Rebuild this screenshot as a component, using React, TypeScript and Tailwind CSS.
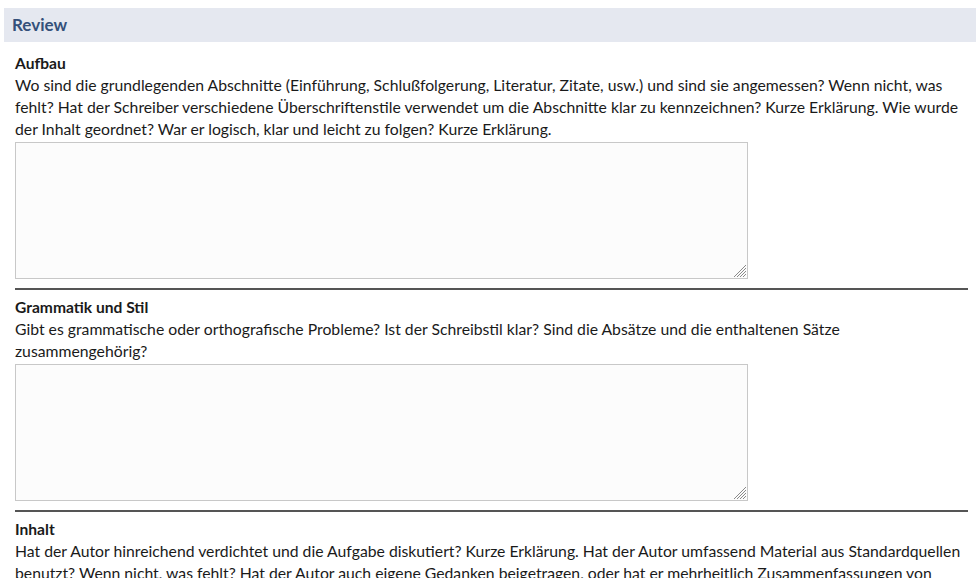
export default function App() {
  const sections = [
    {
      title: "Aufbau",
      text: "Wo sind die grundlegenden Abschnitte (Einführung, Schlußfolgerung, Literatur, Zitate, usw.) und sind sie angemessen? Wenn nicht, was fehlt? Hat der Schreiber verschiedene Überschriftenstile verwendet um die Abschnitte klar zu kennzeichnen? Kurze Erklärung. Wie wurde der Inhalt geordnet? War er logisch, klar und leicht zu folgen? Kurze Erklärung.",
    },
    {
      title: "Grammatik und Stil",
      text: "Gibt es grammatische oder orthografische Probleme? Ist der Schreibstil klar? Sind die Absätze und die enthaltenen Sätze zusammengehörig?",
    },
    {
      title: "Inhalt",
      text: "Hat der Autor hinreichend verdichtet und die Aufgabe diskutiert? Kurze Erklärung. Hat der Autor umfassend Material aus Standardquellen benutzt? Wenn nicht, was fehlt? Hat der Autor auch eigene Gedanken beigetragen, oder hat er mehrheitlich Zusammenfassungen von Quellen geliefert? Kurze Erklärung.",
    },
  ];

  return (
    <div className="min-h-screen bg-white pt-2 pl-1 font-['Lato','Liberation_Sans',sans-serif] text-[16px] leading-[22px] text-[#1a1a1a]">
      <div className="h-[34px] bg-[#e5e8f0] pl-2 flex items-center">
        <h2 className="text-[17px] font-bold text-[#34507a]">Review</h2>
      </div>
      <div className="pl-[11px] pr-2 pt-[10px]">
        {sections.map((s, i) => (
          <div key={s.title}>
            {i > 0 && <hr className="mt-[9px] mb-[6px] border-0 border-t-2 border-[#555555]" />}
            <div className="text-[15.6px] font-bold">{s.title}</div>
            <p className="text-[15.75px]">{s.text}</p>
            <div className="relative mt-[2px] w-[733px]">
              <textarea className="block h-[137px] w-full resize-none border border-[#c8c8c8] bg-[#fcfcfc] outline-none" />
              <svg className="pointer-events-none absolute bottom-[2px] right-[2px]" width="13" height="13" viewBox="0 0 13 13">
                <g stroke="#8a8a8a" strokeWidth="1">
                  <line x1="1" y1="13" x2="13" y2="1" />
                  <line x1="4" y1="13" x2="13" y2="4" />
                  <line x1="7" y1="13" x2="13" y2="7" />
                  <line x1="10" y1="13" x2="13" y2="10" />
                </g>
              </svg>
            </div>
          </div>
        ))}
      </div>
    </div>
  );
}
